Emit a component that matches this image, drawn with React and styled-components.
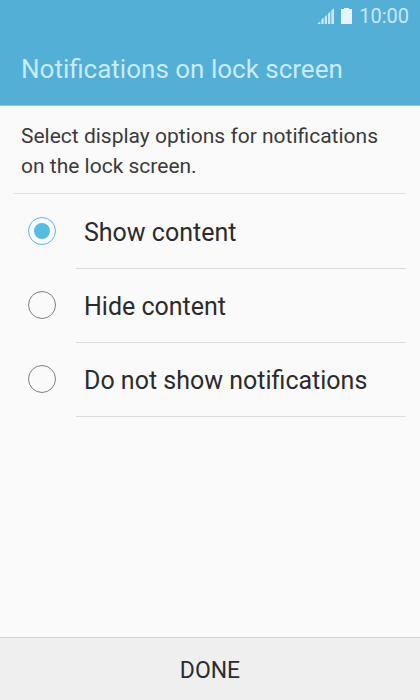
import React from 'react'
import styled, { createGlobalStyle } from 'styled-components'

const OPTIONS = [
  { value: 'show', label: 'Show content' },
  { value: 'hide', label: 'Hide content' },
  { value: 'none', label: 'Do not show notifications' },
]

class App extends React.Component {
  constructor(props) {
    super(props)
    this.state = {
      selected: 'show',
    }
  }

  _select = (e) => {
    this.setState({ selected: e.target.value })
  }

  render() {
    const { selected } = this.state
    return (
      <Screen>
        <GlobalStyle />
        <Header>
          <StatusBar>
            <SignalIcon />
            <BatteryIcon />
            <Clock>10:00</Clock>
          </StatusBar>
          <Title>Notifications on lock screen</Title>
        </Header>
        <Content>
          <Description id="description">
            Select display options for notifications on the lock screen.
          </Description>
          <Options role="radiogroup" aria-labelledby="description">
            {OPTIONS.map(({ value, label }) => (
              <Option key={value}>
                <Radio
                  type="radio"
                  name="notifications"
                  value={value}
                  checked={selected === value}
                  onChange={this._select}
                />
                <OptionLabel>{label}</OptionLabel>
              </Option>
            ))}
          </Options>
        </Content>
        <DoneButton type="button">DONE</DoneButton>
      </Screen>
    )
  }
}

const SignalIcon = () => (
  <svg width="16" height="17" viewBox="0 0 16 17" fill="#c9e8f4" aria-hidden="true">
    <path d="M0 16v-1l2.4-1.6V16z" />
    <path d="M3.4 16v-4.4l2.3-2V16z" />
    <path d="M6.7 16V9l2.3-2.2V16z" />
    <path d="M10 16V5.8l2.3-2.2V16z" />
    <path d="M13.3 16V2.6L16 0.3V16z" />
  </svg>
)

const BatteryIcon = () => (
  <svg width="11" height="17" viewBox="0 0 11 17" fill="#e6f5fb" aria-hidden="true">
    <path d="M3 0h5v1H11v15H0V1h3z" />
  </svg>
)

export default App

const GlobalStyle = createGlobalStyle`
  body {
    margin: 0;
    background: #fafafa;
    font-family: Roboto, "Liberation Sans", sans-serif;
  }
  * {
    box-sizing: border-box;
  }
`

const Screen = styled.div`
  min-height: 100vh;
  display: flex;
  flex-direction: column;
  color: #2b2b2b;
  background: #fafafa;
`

const Header = styled.header`
  background: #53afd6;
  border-bottom: 1px solid #8ecae4;
`

const StatusBar = styled.div`
  height: 33px;
  padding: 0 11px;
  display: flex;
  justify-content: flex-end;
  align-items: center;
  gap: 7px;
`

const Clock = styled.span`
  font-size: 20px;
  line-height: 33px;
  color: #c6e7f4;
`

const Title = styled.h1`
  margin: 0;
  padding: 0 21px;
  font-size: 26px;
  font-weight: 400;
  line-height: 72px;
  color: #c9ebf8;
`

const Content = styled.main`
  flex: 1;
  padding: 0 14px;
`

const Description = styled.p`
  margin: 0;
  padding: 15px 7px 12px;
  font-size: 21px;
  line-height: 30px;
  color: #3a3a3a;
  border-bottom: 1px solid #e0e0e0;
`

const Options = styled.div`
  display: flex;
  flex-direction: column;
  padding-top: 1px;
`

const Option = styled.label`
  display: flex;
  align-items: center;
  gap: 20px;
  padding-left: 14px;
  cursor: pointer;
`

const Radio = styled.input`
  appearance: none;
  flex: none;
  width: 28px;
  height: 28px;
  margin: 0 0 2px;
  padding: 5px;
  border: 1px solid #808080;
  border-radius: 50%;
  background: #fafafa;
  cursor: pointer;

  &:checked {
    border-color: #56bce2;
    background: #56bce2 content-box;
  }
`

const OptionLabel = styled.span`
  flex: 1;
  padding: 2px 8px 0;
  font-size: 25px;
  line-height: 71px;
  border-bottom: 1px solid #dcdcdc;
`

const DoneButton = styled.button`
  height: 63px;
  padding: 2px 0 0;
  border: none;
  border-top: 1px solid #cfcfcf;
  background: #efefef;
  color: #2b2b2b;
  font-family: inherit;
  font-size: 23px;
  cursor: pointer;
`
